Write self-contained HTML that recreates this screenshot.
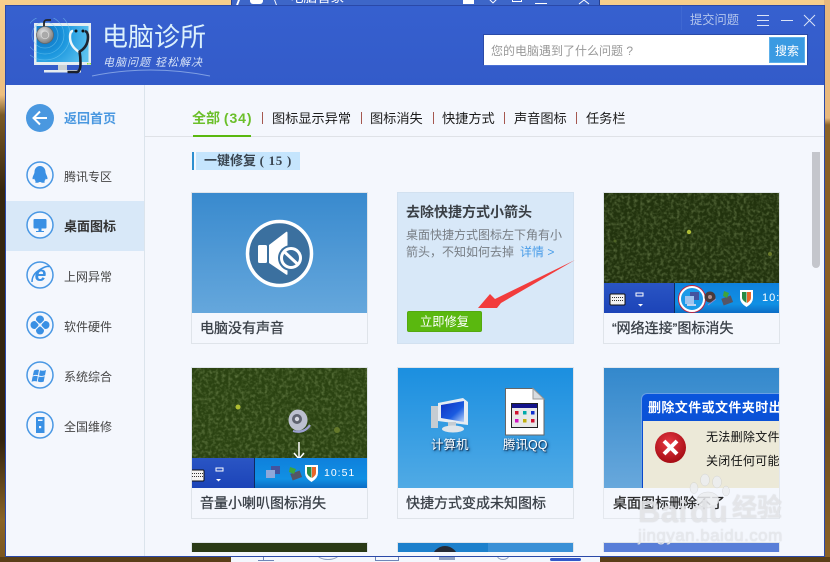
<!DOCTYPE html>
<html lang="zh"><head><meta charset="utf-8"><title>电脑诊所</title>
<style>
*{box-sizing:border-box;margin:0;padding:0}
html,body{width:830px;height:562px;overflow:hidden}
body{position:relative;font-family:"Liberation Sans","Noto Sans CJK SC",sans-serif;background:#3a2a12}
.a{position:absolute}
.t{position:absolute;white-space:nowrap;line-height:16px}
.card{position:absolute;width:177px;height:152px;background:#f4f7fd;border:1px solid #dfe4ea}
.card .img{position:absolute;left:0;top:0;width:175px;height:120px;overflow:hidden}
.card .cap{position:absolute;left:8px;top:126px;font-size:14px;color:#3a4048;line-height:18px;white-space:nowrap;-webkit-text-stroke:.3px #3a4048}
.tab{position:absolute;top:111px;font-size:13.2px;line-height:16px;color:#1c1c1c;white-space:nowrap}
.sep{position:absolute;top:112px;width:1px;height:12px;background:#a5574f}
.side{position:absolute;left:64px;font-size:12px;line-height:16px;color:#454545;white-space:nowrap}
.wm{color:rgba(232,234,238,.8);font-weight:700;text-shadow:0 0 1px rgba(170,170,170,.5)}
</style></head><body>
<svg width="0" height="0" style="position:absolute"><defs>
<filter id="gn" x="0" y="0" width="100%" height="100%"><feTurbulence type="fractalNoise" baseFrequency=".3" numOctaves="2" seed="4"/><feColorMatrix values="0 0 0 0 .36  0 0 0 0 .48  0 0 0 0 .2  0 0 0 .9 -.38"/></filter>
</defs></svg>
<!-- desktop background -->
<div class="a" style="left:0;top:0;width:830px;height:562px;background:linear-gradient(180deg,#f6cf8c 0,#eebf7f 95px,#7b5a26 115px,#37270f 190px,#33240f 440px,#8a6426 520px,#7a5520 562px)"></div>
<div class="a" style="left:824px;top:0;width:6px;height:562px;background:linear-gradient(180deg,#e8b97e 0,#e8b97e 118px,#8a6228 125px,#8a5e24 300px,#6e4d1e 420px,#8a6228 562px)"></div>
<div class="a" style="left:0;top:557px;width:830px;height:5px;background:#5a3f18"></div>
<!-- window behind, top -->
<div class="a" style="left:231px;top:0;width:369px;height:6px;background:#3d66c8;overflow:hidden;border-left:1px solid #27408f;border-right:1px solid #27408f">
  <div class="a" style="left:18px;top:-8px;width:13px;height:12px;background:#fff;border-radius:0 0 3px 3px"></div>
  <div class="a" style="left:5px;top:0;width:2px;height:5px;background:#fff;transform:skewX(-20deg)"></div>
  <div class="a" style="left:43px;top:0;width:1px;height:5px;background:#fff;transform:skewX(20deg)"></div>
  <div class="t" style="left:58px;top:-10px;font-size:13.500px;color:#fff">电脑管家</div>
  <div class="a" style="left:231px;top:0;width:11px;height:4px;background:#fff"></div>
  <div class="a" style="left:257px;top:-6px;width:8px;height:8px;border:1px solid #fff;transform:rotate(45deg)"></div>
  <div class="a" style="left:280px;top:-2px;width:10px;height:4px;border:1px solid #fff"></div>
  <div class="a" style="left:303px;top:3px;width:12px;height:1px;background:#fff"></div>
  <svg class="a" style="left:346px;top:0" width="12" height="5"><path d="M1 4L6 0 11 4" stroke="#fff" fill="none"/></svg>
</div>
<!-- window behind, bottom -->
<div class="a" style="left:231px;top:557px;width:369px;height:5px;background:#f4f7fd;overflow:hidden">
  <div class="a" style="left:27px;top:0;width:16px;height:4px;border-bottom:1px solid #6f86b8"></div>
  <div class="a" style="left:32px;top:0;width:1px;height:4px;background:#6f86b8"></div>
  <div class="a" style="left:86px;top:-8px;width:22px;height:11px;border:1px solid #8fa0c0;border-radius:50%"></div>
  <div class="a" style="left:144px;top:0;width:24px;height:4px;border:1px solid #6f86b8;border-top:0"></div>
  <div class="a" style="left:208px;top:0;width:16px;height:3px;background:#8fa0c0"></div>
  <div class="a" style="left:266px;top:-5px;width:12px;height:8px;border:1px solid #8fa0c0;border-radius:50%"></div>
  <div class="a" style="left:319px;top:1px;width:31px;height:3px;background:#3358c8;border-radius:2px"></div>
</div>
<!-- main window -->
<div class="a" style="left:5px;top:5px;width:820px;height:552px;background:#f4f7fd;border:1px solid #2a49a8;overflow:hidden"></div>
<!-- header -->
<div class="a" style="left:6px;top:6px;width:818px;height:79px;background:linear-gradient(180deg,#3660cf,#335bc9)"></div>
<div class="a" style="left:681px;top:6px;width:1px;height:24px;background:#3f68d2"></div>
<svg class="a" style="left:30px;top:18px" width="66" height="58" viewBox="0 0 66 58">
  <defs><radialGradient id="sc" gradientUnits="userSpaceOnUse" cx="15" cy="17" r="46"><stop offset="0" stop-color="#0b6fc0"/><stop offset=".45" stop-color="#1c97de"/><stop offset="1" stop-color="#5cc2f0"/></radialGradient>
  <radialGradient id="dk" cx=".4" cy=".35" r=".7"><stop offset="0" stop-color="#e8e8e8"/><stop offset="1" stop-color="#777"/></radialGradient></defs>
  <rect x="4" y="5" width="57" height="42" fill="#e4edf2"/>
  <rect x="6.500" y="8" width="52" height="36" fill="url(#sc)"/>
  <g fill="none" stroke="#7fd0f4" stroke-width=".7" opacity=".55"><circle cx="15" cy="17" r="13"/><circle cx="15" cy="17" r="19"/><circle cx="15" cy="17" r="25"/></g>
  <rect x="28" y="47" width="9" height="5" fill="#c8d0d4"/>
  <rect x="14" y="52" width="37" height="2.500" fill="#e6ecef"/>
  <path d="M14 10V5q0-3 3-3h4" fill="none" stroke="#222" stroke-width="1.800"/>
  <circle cx="15" cy="17" r="8.500" fill="url(#dk)" stroke="#666" stroke-width=".8"/>
  <circle cx="15" cy="17" r="3.800" fill="#aaa" stroke="#ddd" stroke-width=".7"/>
  <path d="M43 13q-3 0-3 6 0 9 9 15" fill="none" stroke="#eef7fb" stroke-width="2.400"/>
  <path d="M55 13q3 1 3 6 0 10-9 15" fill="none" stroke="#1d2430" stroke-width="2.600"/>
  <path d="M49.500 33q1 6 1 12 0 10-5 9h-8" fill="none" stroke="#1a1f2a" stroke-width="2.600"/>
  <circle cx="46" cy="13" r="1.500" fill="#111"/><circle cx="53" cy="13" r="1.500" fill="#111"/>
  <rect x="57" y="45" width="1.500" height="1.500" fill="#8ede3a"/><rect x="59.500" y="45" width="1.500" height="1.500" fill="#8ede3a"/>
</svg>
<div class="t" style="left:102px;top:19px;font-size:26px;line-height:36px;color:#dcf1fc">电脑诊所</div>
<div class="t" style="left:103px;top:56px;font-size:11px;line-height:14px;color:#d6e2f7;font-style:italic;letter-spacing:1px">电脑问题 轻松解决</div>
<svg class="a" style="left:90px;top:64px" width="122" height="14"><path d="M2 12Q60 0 120 12" fill="none" stroke="#7f9fe3" stroke-width="1"/></svg>
<div class="t" style="left:690px;top:12px;font-size:12.250px;color:#b3c5ec">提交问题</div>
<div class="a" style="left:757px;top:15px;width:12px;height:1px;background:#dbe4f7"></div>
<div class="a" style="left:757px;top:20px;width:12px;height:1px;background:#dbe4f7"></div>
<div class="a" style="left:757px;top:25px;width:12px;height:1px;background:#dbe4f7"></div>
<div class="a" style="left:781px;top:20px;width:12px;height:1px;background:#dbe4f7"></div>
<svg class="a" style="left:803px;top:14px" width="13" height="13"><path d="M1 1L12 12M12 1L1 12" stroke="#dbe4f7" stroke-width="1" fill="none"/></svg>
<!-- search -->
<div class="a" style="left:483px;top:34px;width:325px;height:32px;background:#fff;border:1px solid #2a4aa8;border-bottom-color:#4a70d4"></div>
<div class="t" style="left:491px;top:43px;font-size:12px;color:#999">您的电脑遇到了什么问题 ?</div>
<div class="a" style="left:769px;top:37px;width:36px;height:26px;background:#3a9ae2;border:1px solid #5db0ea"></div>
<div class="t" style="left:775px;top:43px;font-size:12px;color:#fff">搜索</div>
<!-- sidebar -->
<div class="a" style="left:144px;top:85px;width:1px;height:471px;background:#dbe4ec"></div>
<div class="a" style="left:6px;top:201px;width:138px;height:50px;background:#d8e8f8"></div>
<svg class="a" style="left:26px;top:104px" width="28" height="28"><circle cx="14" cy="14" r="14" fill="#4a98e0"/><path d="M21 14H8M14 7.500L7.500 14l6.500 6.500" fill="none" stroke="#fff" stroke-width="2"/></svg>
<div class="t" style="left:64px;top:111px;font-size:13px;font-weight:700;color:#4a98e0">返回首页</div>
<!-- side icons -->
<svg class="a" style="left:26px;top:161px" width="28" height="28"><circle cx="14" cy="14" r="13" fill="#f4f7fd" stroke="#4a98e4" stroke-width="1.500"/><path d="M14 5c-3.500 0-5.500 3-5.500 6 0 2-2 4-2 6.500 0 1 .8 1 1.800.2.300 1.200 1 2 1.500 2.500-1 .5-1 1.600 1 1.600 1.500 0 2.200-.4 2.700-.8h1c.500.400 1.200.8 2.700.8 2 0 2-1.100 1-1.600.5-.5 1.200-1.300 1.500-2.500 1 .8 1.800.8 1.800-.2 0-2.500-2-4.500-2-6.500 0-3-2-6-5.500-6z" fill="#3a90e4"/></svg>
<svg class="a" style="left:26px;top:211px" width="28" height="28"><circle cx="14" cy="14" r="13" fill="#f4f7fd" stroke="#4a98e4" stroke-width="1.500"/><rect x="7.500" y="8" width="13" height="9.500" rx="1" fill="#3a90e4"/><path d="M12.500 17.500h3v2.500h2.500v1H10v-1h2.500z" fill="#3a90e4"/></svg>
<svg class="a" style="left:26px;top:261px" width="28" height="28"><circle cx="14" cy="14" r="13" fill="#f4f7fd" stroke="#4a98e4" stroke-width="1.500"/><text x="14.500" y="20" font-size="21" font-weight="700" font-family="Liberation Sans" font-style="italic" fill="#3a90e4" text-anchor="middle">e</text><path d="M6 21Q6 13 14 8.500T23 6" fill="none" stroke="#3a90e4" stroke-width="1.500"/></svg>
<svg class="a" style="left:26px;top:311px" width="28" height="28"><circle cx="14" cy="14" r="13" fill="#f4f7fd" stroke="#4a98e4" stroke-width="1.500"/><g fill="#3a90e4"><circle cx="14" cy="8.500" r="4"/><circle cx="14" cy="19.500" r="4"/><circle cx="8.500" cy="14" r="4"/><circle cx="19.500" cy="14" r="4"/></g><path d="M9 9L19 19M19 9L9 19" stroke="#f4f7fd" stroke-width="1.200"/></svg>
<svg class="a" style="left:26px;top:361px" width="28" height="28"><circle cx="14" cy="14" r="13" fill="#f4f7fd" stroke="#4a98e4" stroke-width="1.500"/><g fill="#3a90e4"><path d="M8 9.500q2.500-1.500 5-.6l-1 5.300q-2.500-.8-5.200.4z"/><path d="M14 9.200q3 1.200 6 -.2l-1 5.300q-3 1.200-6 .2z"/><path d="M6.600 15.500q2.500-1 5.200-.3l-1 5.300q-2.500-.8-5.200.3z"/><path d="M12.700 15.500q3 1 6-.3l-1 5.400q-3 1.200-6-.2z"/></g></svg>
<svg class="a" style="left:26px;top:411px" width="28" height="28"><circle cx="14" cy="14" r="13" fill="#f4f7fd" stroke="#4a98e4" stroke-width="1.500"/><rect x="10" y="6" width="8.500" height="16" fill="#3a90e4"/><rect x="12" y="8.500" width="4.500" height="1.500" fill="#f4f7fd"/><rect x="13" y="15" width="2.200" height="2.200" fill="#f4f7fd"/></svg>
<div class="side" style="top:169px">腾讯专区</div>
<div class="side" style="top:219px;font-weight:700;font-size:13px;color:#333">桌面图标</div>
<div class="side" style="top:269px">上网异常</div>
<div class="side" style="top:319px">软件硬件</div>
<div class="side" style="top:369px">系统综合</div>
<div class="side" style="top:419px">全国维修</div>
<!-- tabs -->
<div class="a" style="left:145px;top:136px;width:679px;height:1px;background:#dfe2e7"></div>
<div class="a" style="left:193px;top:135px;width:58px;height:2px;background:#5ab80f"></div>
<div class="tab" style="left:192px;color:#6bbf2a;font-weight:700;font-size:14px;top:110px">全部 <span style="letter-spacing:.9px">(34)</span></div>
<div class="sep" style="left:262px"></div><div class="tab" style="left:272px">图标显示异常</div>
<div class="sep" style="left:361px"></div><div class="tab" style="left:370px">图标消失</div>
<div class="sep" style="left:433px"></div><div class="tab" style="left:442px">快捷方式</div>
<div class="sep" style="left:504px"></div><div class="tab" style="left:514px">声音图标</div>
<div class="sep" style="left:576px"></div><div class="tab" style="left:586px">任务栏</div>
<!-- section -->
<div class="a" style="left:192px;top:152px;width:2px;height:18px;background:#2d8fd0"></div>
<div class="a" style="left:196px;top:152px;width:104px;height:18px;background:#c5e5fd"></div>
<div class="t" style="left:204px;top:153px;font-size:13px;font-weight:700;color:#3a4550">一键修复 <span style="font-family:'Liberation Serif',serif;letter-spacing:.7px">( 15 )</span></div>
<!-- card 1 -->
<div class="card" style="left:191px;top:192px"><div class="img" style="background:linear-gradient(180deg,#398ace,#65a7dc)">
  <svg class="a" style="left:52px;top:26px" width="72" height="72" viewBox="0 0 72 72"><circle cx="35.500" cy="34.500" r="32" fill="#3b709f" stroke="#fff" stroke-width="3.500"/><rect x="14" y="26" width="9" height="18" rx="1.500" fill="#fff"/><path d="M25 26L42 13q1.500-1 1.500 1v41q0 1.500-1.500.5L25 44z" fill="#fff"/><circle cx="47" cy="39" r="13" fill="#3b709f"/><circle cx="47" cy="39" r="9.500" fill="none" stroke="#fff" stroke-width="3"/><path d="M40.500 33L53.500 45" stroke="#fff" stroke-width="3"/></svg>
</div><div class="cap">电脑没有声音</div></div>
<!-- card 2 -->
<div class="a" style="left:397px;top:192px;width:177px;height:152px;background:#d8e8f8;border:1px solid #d2e1f0"></div>
<div class="t" style="left:406px;top:204px;font-size:14px;font-weight:700;color:#3a3f45">去除快捷方式小箭头</div>
<div class="t" style="left:406px;top:227px;font-size:12px;color:#777d84">桌面快捷方式图标左下角有小</div>
<div class="t" style="left:406px;top:244px;font-size:12px;color:#777d84">箭头，不知如何去掉</div>
<div class="t" style="left:520px;top:244px;font-size:12px;color:#4a9de8">详情 &gt;</div>
<div class="a" style="left:407px;top:311px;width:75px;height:21px;background:#5ab80f;border:1px solid #54a90f;border-radius:2px"></div>
<div class="t" style="left:420px;top:314px;font-size:12.250px;color:#fff">立即修复</div>
<svg class="a" style="left:470px;top:255px" width="110" height="60"><path d="M8 53L20 39 25 44 105 5 31 48 27 53z" fill="#f23c3c"/></svg>
<!-- card 3 -->
<div class="card" style="left:603px;top:192px"><div class="img" style="background:#1085dd">
  <svg class="a" style="left:0;top:0" width="175" height="90"><rect width="175" height="90" fill="#22330e"/><rect width="175" height="90" filter="url(#gn)"/><circle cx="85" cy="39" r="2.200" fill="#aebc36"/><circle cx="166" cy="61" r="2" fill="#6a7a2a"/><circle cx="11" cy="48" r="1.500" fill="#4e6426"/></svg>
  <div class="a" style="left:0;top:90px;width:70px;height:30px;background:linear-gradient(180deg,#2a55c4,#1c44b8)"></div>
  <div class="a" style="left:70px;top:90px;width:105px;height:30px;background:linear-gradient(180deg,#0f80dc,#1090e4 70%,#0c6cc4)"></div>
  <div class="a" style="left:70px;top:90px;width:1px;height:30px;background:#102a60"></div>
  <svg class="a" style="left:5px;top:97px" width="42" height="22"><rect x="1" y="4" width="15" height="11" rx="1" fill="#f2f2f2" stroke="#111"/><path d="M3 7.500h11M3 10.500h11" stroke="#333" stroke-dasharray="1 1"/><rect x="27" y="3" width="7" height="3" fill="none" stroke="#fff"/><path d="M29 14h5l-2.500 2.500z" fill="#fff"/></svg>
  <div class="a" style="left:75px;top:93px;width:26px;height:26px;border-radius:50%;background:#1b9ae8;border:2px solid #fff;box-shadow:0 0 0 1px #c8203c"></div>
  <svg class="a" style="left:79px;top:98px" width="18" height="16"><rect x="7" y="1" width="9" height="8" fill="#43539e"/><rect x="2" y="5" width="9" height="8" fill="#9fc4ee"/><rect x="4" y="13" width="9" height="2" fill="#c0d4f0"/></svg>
  <svg class="a" style="left:99px;top:96px" width="52" height="20"><circle cx="7" cy="8" r="5.500" fill="#4a3a3a"/><circle cx="7" cy="8" r="2" fill="#b09090"/><path d="M5 16L13 10" stroke="#8a8ad0"/><rect x="19" y="8" width="10" height="7" fill="#556" transform="rotate(-20 24 11)"/><path d="M21 2l5 2-2 5-4-2z" fill="#3fa33a"/><path d="M37 1h13v8q0 5-6.500 9Q37 14 37 9z" fill="#fff"/><path d="M39 3h4.500v11Q39 11 39 9z" fill="#2a8a44"/><path d="M44 3h4v6q0 2.500-4 5z" fill="#e8662a"/></svg>
  <div class="t" style="left:158px;top:97px;font-size:11px;color:#fff;letter-spacing:1px">10:</div>
</div><div class="cap">“网络连接”图标消失</div></div>
<!-- card 4 -->
<div class="card" style="left:191px;top:367px"><div class="img" style="height:120px;background:#1088dc">
  <svg class="a" style="left:0;top:0" width="175" height="90"><rect width="175" height="90" fill="#2b4312"/><rect width="175" height="90" filter="url(#gn)"/><circle cx="46" cy="39" r="2.500" fill="#b0be32"/><circle cx="145" cy="62" r="3" fill="#64782a"/></svg>
  <svg class="a" style="left:95px;top:40px" width="26" height="26"><ellipse cx="11" cy="12" rx="9.500" ry="10.500" fill="#bcc0cf"/><circle cx="10" cy="11" r="5" fill="#5f6370"/><circle cx="10" cy="11" r="2.200" fill="#d6d8e0"/><path d="M6 23q11 3 17-6M11 25" stroke="#9ca0d0" stroke-width="2.200" fill="none"/></svg>
  <svg class="a" style="left:100px;top:73px" width="14" height="20"><path d="M7 1V17M2 12L7 18 12 12" fill="none" stroke="#fff" stroke-width="1.500"/></svg>
  <div class="a" style="left:0;top:90px;width:62px;height:30px;background:linear-gradient(180deg,#2a55c4,#1c44b8)"></div>
  <div class="a" style="left:62px;top:90px;width:113px;height:30px;background:linear-gradient(180deg,#0f80dc,#1090e4 70%,#0c6cc4)"></div>
  <div class="a" style="left:62px;top:90px;width:1px;height:30px;background:#102a60"></div>
  <svg class="a" style="left:0;top:98px" width="40" height="20"><rect x="-4" y="4" width="16" height="11" rx="1" fill="#f2f2f2" stroke="#111"/><path d="M0 7.500h11M0 10.500h11" stroke="#333" stroke-dasharray="1 1"/><rect x="24" y="2" width="7" height="3" fill="none" stroke="#fff"/><path d="M24 13h5l-2.500 2.500z" fill="#fff"/></svg>
  <svg class="a" style="left:72px;top:96px" width="56" height="20"><rect x="7" y="2" width="9" height="8" fill="#43539e"/><rect x="2" y="6" width="9" height="8" fill="#8fa8da"/><rect x="27" y="8" width="10" height="7" fill="#556" transform="rotate(-20 32 11)"/><path d="M26 3l6 2-2 5-5-2z" fill="#3fa33a"/><path d="M41 1h13v8q0 5-6.500 9Q41 14 41 9z" fill="#fff"/><path d="M43 3h4.500v11Q43 11 43 9z" fill="#2a8a44"/><path d="M48 3h4v6q0 2.500-4 5z" fill="#e8662a"/></svg>
  <div class="t" style="left:132px;top:97px;font-size:10.500px;color:#fff;letter-spacing:1px">10:51</div>
</div><div class="cap">音量小喇叭图标消失</div></div>
<!-- card 5 -->
<div class="card" style="left:397px;top:367px"><div class="img" style="background:linear-gradient(180deg,#1b8fe0,#50aae5)">
  <svg class="a" style="left:32px;top:27px" width="42" height="42"><defs><linearGradient id="ms" x1="0" y1="0" x2="1" y2="1"><stop offset="0" stop-color="#0f2fc0"/><stop offset=".6" stop-color="#1a5be0"/><stop offset="1" stop-color="#b8d4fa"/></linearGradient></defs><rect x="1" y="11" width="7" height="22" fill="#c5ccd2"/><path d="M8 8L33 3 38 7V30L8 26z" fill="#e6ecf2"/><path d="M11 10L34 6V27L11 23z" fill="url(#ms)"/><rect x="18" y="27" width="8" height="6" fill="#c5ccd2"/><ellipse cx="23" cy="34" rx="11" ry="3.500" fill="#dfe5ea"/></svg>
  <svg class="a" style="left:106px;top:19px" width="42" height="50"><path d="M1.500 1.500H29L40 12V48H1.500z" fill="#fff" stroke="#666"/><path d="M29 1.500V12H40z" fill="#d8dce0" stroke="#999"/></svg>
  <svg class="a" style="left:113px;top:35px" width="28" height="28"><rect x=".5" y=".5" width="26" height="24" fill="#e8e8e8" stroke="#222"/><rect x="1" y="1" width="25" height="4" fill="#13138a"/><rect x="4" y="8" width="3.500" height="3.500" fill="#d01030"/><rect x="12" y="8" width="3.500" height="3.500" fill="#0aa"/><rect x="20" y="8" width="3.500" height="3.500" fill="#1030d0"/><rect x="4" y="16" width="3.500" height="3.500" fill="#d010c0"/><rect x="12" y="16" width="3.500" height="3.500" fill="#c0b010"/><rect x="20" y="16" width="3.500" height="3.500" fill="#d01030"/></svg>
  <div class="t" style="left:33px;top:69px;font-size:12.500px;color:#fff;text-shadow:1px 1px 1px #10335a,1px 1px 3px #10335a">计算机</div>
  <div class="t" style="left:105px;top:69px;font-size:12.500px;color:#fff;text-shadow:1px 1px 1px #10335a,1px 1px 3px #10335a">腾讯QQ</div>
</div><div class="cap">快捷方式变成未知图标</div></div>
<!-- card 6 -->
<div class="card" style="left:603px;top:367px;border-color:#e4e8ee"><div class="img" style="background:linear-gradient(180deg,#3388cc,#68a8dc)">
  <div class="a" style="left:37px;top:25px;width:140px;height:95px;background:linear-gradient(180deg,#0a55dc,#0846c8);border-radius:6px 0 0 0;border:1px solid #6aa0e4;border-right:0;border-bottom:0"></div>
  <div class="a" style="left:39px;top:53px;width:136px;height:67px;background:#ece9d8"></div>
  <div class="t" style="left:44px;top:32px;font-size:13px;font-weight:700;color:#fff;letter-spacing:.4px">删除文件或文件夹时出</div>
  <svg class="a" style="left:50px;top:63px" width="34" height="34"><defs><radialGradient id="rd" cx=".45" cy=".35" r=".7"><stop offset="0" stop-color="#e83a44"/><stop offset="1" stop-color="#a00810"/></radialGradient></defs><circle cx="16.500" cy="16.500" r="15.500" fill="url(#rd)"/><path d="M10 10L23 23M23 10L10 23" stroke="#fff" stroke-width="4"/></svg>
  <div class="t" style="left:102px;top:61px;font-size:12px;color:#111;letter-spacing:.3px">无法删除文件:</div>
  <div class="t" style="left:102px;top:85px;font-size:12px;color:#111;letter-spacing:.3px">关闭任何可能</div>
</div><div class="cap" style="color:#2a2a2a;-webkit-text-stroke:.3px #2a2a2a;left:9px">桌面图标删除不了</div></div>
<!-- row 3 -->
<div class="a" style="left:191px;top:542px;width:177px;height:10px;background:#2a3a16;border:1px solid #dfe4ea;border-bottom:0"></div>
<div class="a" style="left:397px;top:542px;width:177px;height:10px;overflow:hidden;background:#3a90d6;border:1px solid #dfe4ea;border-bottom:0"><div class="a" style="left:0;top:0;width:90px;height:9px;background:#1c80cc"></div><div class="a" style="left:34px;top:3px;width:26px;height:26px;border-radius:50%;background:#252a35"></div></div>
<div class="a" style="left:603px;top:542px;width:177px;height:10px;background:#587ed8;border:1px solid #dfe4ea;border-bottom:0"></div>
<!-- scrollbar -->
<div class="a" style="left:812px;top:152px;width:8px;height:116px;background:#c4c6cc;border-radius:0 0 4px 4px"></div>
<!-- watermark -->
<svg class="a" style="left:636px;top:470px" width="150" height="52" viewBox="0 0 150 52"><g fill="#eceef1" opacity=".85" stroke="#bbb" stroke-width=".3"><ellipse cx="69" cy="10" rx="4.500" ry="6"/><ellipse cx="81" cy="12" rx="4.500" ry="6"/><ellipse cx="58" cy="18" rx="4" ry="5.500"/><ellipse cx="90" cy="21" rx="3.500" ry="5"/><ellipse cx="72" cy="30" rx="11" ry="8"/></g></svg>
<div class="t wm" style="left:638px;top:495px;font-size:31px;line-height:34px;letter-spacing:.5px">Bai</div>
<div class="t wm" style="left:690px;top:495px;font-size:31px;line-height:34px">du</div>
<div class="t wm" style="left:732px;top:493px;font-size:25px;line-height:30px">经验</div>
<div class="t" style="left:638px;top:526px;font-size:17px;line-height:20px;color:rgba(232,234,238,.9);letter-spacing:.45px;text-shadow:0 0 1px rgba(170,170,170,.5)">jingyan.baidu.com</div>
</body></html>
